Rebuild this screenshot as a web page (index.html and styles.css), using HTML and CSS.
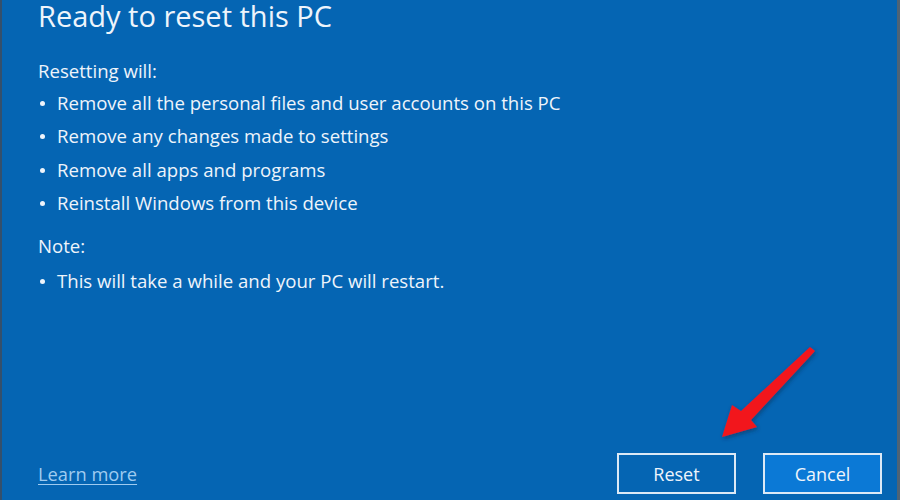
FILE: index.html
```html
<!DOCTYPE html>
<html>
<head>
<meta charset="utf-8">
<link rel="stylesheet" href="styles.css">
</head>
<body>
<div class="dialog">
  <div class="content">
    <h1 class="title">Ready to reset this PC</h1>
    <p class="label">Resetting will:</p>
    <ul class="list">
      <li>Remove all the personal files and user accounts on this PC</li>
      <li>Remove any changes made to settings</li>
      <li>Remove all apps and programs</li>
      <li>Reinstall Windows from this device</li>
    </ul>
    <p class="label note">Note:</p>
    <ul class="list last">
      <li>This will take a while and your PC will restart.</li>
    </ul>
  </div>
  <div class="footer">
    <a class="learn" href="#">Learn more</a>
    <div class="buttons">
      <button class="btn">Reset</button>
      <button class="btn primary">Cancel</button>
    </div>
  </div>
  <svg class="arrow" viewBox="0 0 900 500" width="900" height="500">
    <defs>
      <filter id="sh" x="-20%" y="-20%" width="140%" height="140%">
        <feDropShadow dx="1" dy="2" stdDeviation="2" flood-color="#0a2a50" flood-opacity="0.6"/>
      </filter>
    </defs>
    <polygon filter="url(#sh)" fill="#f2141c" points="722,437 732,405 741,411 810,347 815,351 751,420 757,427"/>
  </svg>
</div>
</body>
</html>
```
FILE: styles.css
```css
html, body {
  margin: 0;
  padding: 0;
}
body {
  width: 900px;
  height: 500px;
  overflow: hidden;
  font-family: "Open Sans", "Noto Sans", sans-serif;
}
.dialog {
  position: relative;
  box-sizing: border-box;
  width: 900px;
  height: 500px;
  background: #0565b3;
  border-left: 2px solid #34506c;
  border-right: 3px solid #4f6375;
  color: #eef4fb;
  display: flex;
  flex-direction: column;
}
.content {
  flex: 1;
  padding: 0 0 0 36px;
}
.title {
  margin: 0;
  font-weight: 400;
  font-size: 29px;
  line-height: 38px;
  margin-top: -3px;
}
.label {
  margin: 22px 0 0 0;
  font-size: 18.6px;
  line-height: 27px;
}
.label.note {
  margin-top: 13px;
}
.list {
  list-style: none;
  margin: 2px 0 0 0;
  padding: 0;
}
.list.last {
  margin-top: 5px;
}
.list li {
  font-size: 18.6px;
  line-height: 33.3px;
  position: relative;
  padding-left: 19px;
}
.list li::before {
  content: "";
  position: absolute;
  left: 2px;
  top: 15px;
  width: 5px;
  height: 5px;
  border-radius: 50%;
  background: #eef4fb;
}
.footer {
  display: flex;
  justify-content: space-between;
  align-items: center;
  padding: 0 15px 6px 36px;
}
.learn {
  color: #9fcbf0;
  font-size: 18.3px;
  text-decoration: underline;
  text-underline-offset: 3px;
}
.buttons {
  display: flex;
  gap: 27px;
}
.btn {
  box-sizing: border-box;
  width: 119px;
  height: 41px;
  border: 2px solid #dce9f6;
  background: transparent;
  color: #eef4fb;
  font-family: "Open Sans", "Noto Sans", sans-serif;
  font-size: 18px;
  padding: 0;
}
.btn.primary {
  background: #0b79d6;
}
.arrow {
  position: absolute;
  left: -2px;
  top: 0;
  pointer-events: none;
}
```
